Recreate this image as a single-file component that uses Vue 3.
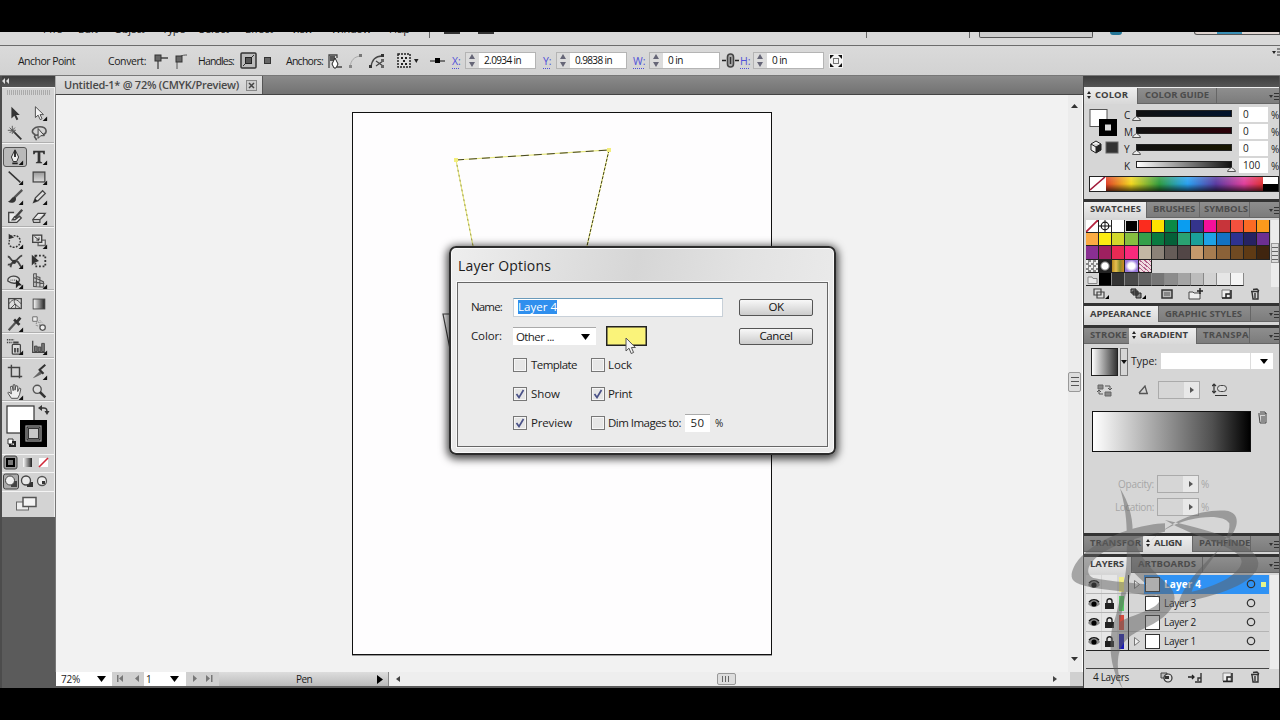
<script setup>
const menus = ['File', 'Edit', 'Object', 'Type', 'Select', 'Effect', 'View', 'Window', 'Help']
const menuWidths = [20, 20, 30, 23, 30, 28, 21, 40, 20]

// Spreads a label to the given width with letter spacing
const vFit = {
  mounted(el, { value }) {
    const natural = el.getBoundingClientRect().width
    el.style.letterSpacing = `${(value - natural) / el.textContent.length}px`
  },
}

const corner = '<path d="M19 14v5h-5z" fill="#111"/>'
const art = {
  select: '<path d="M6 3v13l3.3-3 2.4 5 2-1-2.4-4.8h4z" fill="#333"/>',
  direct: '<path d="M6 3v12l3-2.6 2.4 5 2-1-2.2-4.6h3.8z" fill="#f4f4f4" stroke="#444"/>' + corner,
  wand: '<path d="M8 8l9 9" stroke="#333" stroke-width="2"/><path d="M7 2v9M2 7h9M4 4l6 6M10 4l-6 6" stroke="#555"/>',
  lasso: '<path d="M6 12C-1 9 4 3 11 3c8 0 9 7 3 9-4 1-9-1-9 2 0 2 2 1 2 4" fill="none" stroke="#555" stroke-width="1.8"/><path d="M9 5v11l3-3h4z" fill="#ddd" stroke="#333"/>',
  pen: '<path d="M10 2l4 8-2 5H8l-2-5z" fill="#eee" stroke="#222"/><path d="M10 3v7M7 17h6" stroke="#222" stroke-width="2"/>' + corner,
  type: '<path d="M3.500 3h13v4h-1.400l-1-2H11.500v10l2 1v1h-7v-1l2-1V5H6l-1 2H3.500z" fill="#333"/>' + corner,
  line: '<path d="M3 4l13 12" stroke="#333" stroke-width="1.6"/>' + corner,
  rect: '<rect x="3.500" y="4.500" width="13" height="11" fill="url(#boxGradient)" stroke="#444" stroke-width="1.4"/>' + corner,
  brush: '<path d="M18 2l-9 9" stroke="#555" stroke-width="2.600"/><path d="M10 10c-4-1-4 4-8 5 4 3 10 1 9-4z" fill="#333"/>' + corner,
  pencil: '<path d="M4 16l2-5 8-8 3 3-8 8z" fill="#ddd" stroke="#444" stroke-width="1.4"/><path d="M4 16l2-4 2 2z" fill="#222"/>' + corner,
  blob: '<path d="M9 5H3v11h9l5-5-2-2-5 4H7l3-4" fill="#eee" stroke="#444" stroke-width="1.5"/><path d="M18 2l-8 9" stroke="#444" stroke-width="2.600"/>',
  eraser: '<path d="M3 13l6-7h8l-6 7v3H4zM3 13h8l6-6" fill="#eee" stroke="#444" stroke-width="1.3"/>' + corner,
  rotate: '<path d="M5 5c12-5 15 11 4 12-5 0-7-4-5-8" fill="none" stroke="#333" stroke-width="1.6" stroke-dasharray="2 1.5"/><path d="M3 2v6l6-2z" fill="#333"/>' + corner,
  scale: '<path d="M9 9h8v6H9z" fill="#e4e4e4" stroke="#666" stroke-width="1.5"/><rect x="3" y="3.500" width="10" height="8" fill="#ddd" stroke="#444" stroke-width="1.5"/><path d="M5 5l5 4M10 6v3H7" stroke="#222" fill="none"/>' + corner,
  warp: '<path d="M2 5c4 0 2 5 7 5s5-6 9-6M2 14c6 1 4-5 9-4s3 5 6 6M5 17c1-5 4-8 8-8" fill="none" stroke="#444" stroke-width="2"/><circle cx="9" cy="11" r="2.200" fill="#333"/>' + corner,
  free: '<rect x="6" y="4" width="11" height="12" fill="none" stroke="#333" stroke-width="2" stroke-dasharray="2 2"/><path d="M2 3v12l3-3 5-2z" fill="#333"/>',
  symbol: '<path d="M2 10c-1-7 13-7 13-1-1 4-8 5-13 1z" fill="#ddd" stroke="#444" stroke-width="1.5"/><path d="M11 8v10l3-3h4z" fill="#222"/><path d="M5 9h6" stroke="#333" stroke-dasharray="1 1"/>' + corner,
  graph: '<path d="M4 2v14l13 1M4 2h3v14M7 5l4 1v10M4 6l7 3 4 2v5M4 11l12 2" fill="#ccc" stroke="#555" stroke-width="1.2"/>' + corner,
  mesh: '<rect x="3" y="4" width="14" height="11" fill="#ddd" stroke="#444" stroke-width="1.4"/><path d="M3 10c5-7 9-6 14 0M10 4c-3 5 3 7 0 11M5 15l5-5 6 5" fill="none" stroke="#444"/>',
  grad: '<rect x="3.500" y="4.500" width="13" height="11" fill="url(#toolGradient)" stroke="#444"/>',
  eyedrop: '<path d="M3 17l8-9" stroke="#555" stroke-width="2.500"/><path d="M9 5l6 6M12 8l4-5" stroke="#333" stroke-width="3"/>' + corner,
  blend: '<path d="M3 2h5v5H3z" fill="#eee" stroke="#666"/><circle cx="14" cy="14" r="3" fill="#eee" stroke="#555" stroke-width="1.4"/><path d="M7 8h4v4H7zM11 6l3 3" fill="none" stroke="#777" stroke-dasharray="1 1"/>',
  spray: '<rect x="7" y="7" width="9" height="11" rx="1" fill="#ddd" stroke="#444" stroke-width="1.4"/><path d="M8 5h6M10 11v5M13 11v5" stroke="#444" stroke-width="2"/><path d="M1 2h8M1 5h6" stroke="#444" stroke-width="1.6" stroke-dasharray="1.5 1"/>' + corner,
  bars: '<path d="M3 3v13h14" fill="none" stroke="#444" stroke-width="1.4"/><path d="M5 15V9h3v6zM9 15v-5h3v5zM13 15V6h3v9z" fill="#777" stroke="#444"/>' + corner,
  crop: '<path d="M6 2v13h12M2 5h13v12" fill="none" stroke="#444" stroke-width="1.6"/>',
  slice: '<path d="M3 17l8-8 3 2c-3 3-7 4-11 6z" fill="#666"/><path d="M10 8l7-6M10 7l5 5" stroke="#333" stroke-width="2.400"/>' + corner,
  hand: '<path d="M6 17L2 11l1-1 3 2-1-8 2-.5 1 5V2h2v6l1-5 2 .5v6l2-4 1.500 1L15 13l-2 4z" fill="#eee" stroke="#444"/>' + corner,
  zoom: '<circle cx="8" cy="7" r="4.500" fill="#ddd" stroke="#555" stroke-width="1.5"/><path d="M11 10l6 6" stroke="#333" stroke-width="2.800"/>',
}
const toolGroups = [
  { cls: 'g1', tools: ['select', 'direct', 'wand', 'lasso'] },
  { cls: 'g2', tools: ['pen', 'type', 'line', 'rect', 'brush', 'pencil', 'blob', 'eraser'] },
  { cls: 'g3', tools: ['rotate', 'scale', 'warp', 'free', 'symbol', 'graph'] },
  { cls: 'g4', tools: ['mesh', 'grad', 'eyedrop', 'blend'] },
  { cls: 'g5', tools: ['spray', 'bars'] },
  { cls: 'g6', tools: ['crop', 'slice', 'hand', 'zoom'] },
]

const channels = [
  { name: 'C', value: '0', bar: 'linear-gradient(90deg,#111,#00112c)', at: 0 },
  { name: 'M', value: '0', bar: 'linear-gradient(90deg,#111,#2c0008)', at: 0 },
  { name: 'Y', value: '0', bar: 'linear-gradient(90deg,#111,#181600)', at: 0 },
  { name: 'K', value: '100', bar: 'linear-gradient(90deg,#fff,#111)', at: 95 },
]

const swatches = [
  'none', 'reg', '#fff', '#000', '#fb2c1e', '#ffe000', '#0b8a46', '#0a9df0', '#34348c', '#f5109a', '#c7343a', '#f4513e', '#fb6a24', '#fb9a1c',
  '#fbab43', '#fbec12', '#d2d82c', '#86bf40', '#35a04a', '#0a7a40', '#056038', '#2aa272', '#1aa09a', '#1ea2e6', '#1272c4', '#2e3290', '#262262', '#6c2f92',
  '#8a2f92', '#9e2060', '#e82a54', '#f82a7c', '#c4b8a4', '#8c8278', '#665c58', '#524646', '#c69a6c', '#a67c50', '#8b6238', '#704a22', '#5f3a14', '#40250f',
]
const patterns = ['checker', 'glow', 'gold', 'violet', 'floral']
const greys = ['#000', '#333', '#4a4a4a', '#626262', '#767676', '#8c8c8c', '#a4a4a4', '#bcbcbc', '#d2d2d2', '#e6e6e6', '#f4f4f4']

const layers = [
  { name: 'Layer 4', color: '#f2ee84', active: true, arrow: true, locked: false },
  { name: 'Layer 3', color: '#52cf62', locked: true },
  { name: 'Layer 2', color: '#d64a3c', locked: true },
  { name: 'Layer 1', color: '#1b1bb4', arrow: true, locked: true },
]
</script>

<template>
  <div class="screen">
    <svg class="defs" width="0" height="0">
      <defs>
        <linearGradient id="toolGradient"><stop offset="0" stop-color="#fff" /><stop offset="1" stop-color="#222" /></linearGradient>
        <linearGradient id="boxGradient" x2="0" y2="1"><stop offset="0" stop-color="#999" /><stop offset="1" stop-color="#ddd" /></linearGradient>
      </defs>
    </svg>

    <header class="menubar">
      <div class="menus"><div v-for="(m, i) in menus" :key="m" class="menu"><span v-fit="menuWidths[i]">{{ m }}</span></div></div>
      <i class="mdiv"></i><i class="mblock"></i><i class="mblock second"></i>
      <i class="mdiv d2"></i><i class="mdiv d3"></i><i class="search"></i><i class="help"></i><i class="winbtns"><b></b></i>
    </header>

    <div class="control">
      <span><span v-fit="57">Anchor Point</span></span>
      <span><span v-fit="38">Convert:</span></span>
      <svg width="15" height="16"><path d="M6 5h8M4 7v9" stroke="#444" stroke-width="1.3" /><rect x="1" y="2" width="6" height="6" fill="#666" stroke="#333" /></svg>
      <svg width="15" height="16"><path d="M3 16V8c2-5 5-6 10-6" fill="none" stroke="#555" /><rect x="2" y="3" width="6" height="6" fill="#666" stroke="#333" /></svg>
      <span><span v-fit="36">Handles:</span></span>
      <svg width="17" height="17"><rect x="1" y="1" width="15" height="15" rx="1" fill="#bbb" stroke="#333" stroke-width="1.5" /><path d="M3 14L14 3" stroke="#333" /><rect x="5.500" y="5.500" width="6" height="6" fill="#555" stroke="#222" /></svg>
      <svg width="9" height="9"><rect x="1.500" y="1.500" width="6" height="6" fill="#666" stroke="#333" /></svg>
      <span><span v-fit="37">Anchors:</span></span>
      <svg width="17" height="16"><path d="M2 15V2h8v3M10 14h5" fill="none" stroke="#444" stroke-width="1.3" /><path d="M3 3h5v5H3z" fill="#555" /><path d="M8 5l3 6-2 4H7l-2-4z" fill="#fff" stroke="#222" /></svg>
      <svg width="16" height="16"><path d="M2 14C3 7 6 4 12 3" fill="none" stroke="#aaa" /><rect x="1" y="12" width="3" height="3" fill="#888" /><rect x="11" y="1" width="3" height="3" fill="#777" /></svg>
      <svg width="17" height="16"><path d="M2 14C3 6 7 3 13 3" fill="none" stroke="#444" stroke-width="1.3" /><path d="M7 8l7 5M7 13l7-5" fill="none" stroke="#444" stroke-width="1.2" /><rect x="0" y="12" width="3" height="3" fill="#333" /><rect x="12" y="1" width="3" height="3" fill="#333" /><path d="M12 6h3v3h-3zM12 12h3v3h-3z" fill="#666" /></svg>
      <svg width="23" height="16"><rect x="1" y="1" width="12" height="13" fill="#ddd" stroke="#222" stroke-width="1.5" stroke-dasharray="2 1" /><path d="M4 4h2v2H4zM8 4h2v2H8zM6 7h2v2H6zM4 10h2v2H4zM8 10h2v2H8z" fill="#222" /><path d="M17 6h4.500l-2.200 4z" fill="#222" /></svg>
      <svg width="17" height="8"><path d="M1 4h15" stroke="#111" /><rect x="6" y="1" width="5" height="5" fill="#000" /></svg>
      <span class="axis">X:</span>
      <div class="spin"><i></i><b><span v-fit="37">2.0934 in</span></b></div>
      <span class="axis">Y:</span>
      <div class="spin"><i></i><b><span v-fit="37">0.9838 in</span></b></div>
      <span class="axis">W:</span>
      <div class="spin"><i></i><b><span v-fit="15">0 in</span></b></div>
      <svg width="17" height="15"><path d="M0 7.500h4M13 7.500h4" stroke="#222" stroke-width="1.5" /><rect x="5.500" y="1" width="6" height="13" rx="3" fill="#aaa" stroke="#444" stroke-width="1.6" /><path d="M8.500 4v7" stroke="#333" stroke-width="1.5" /></svg>
      <span class="axis">H:</span>
      <div class="spin"><i></i><b><span v-fit="15">0 in</span></b></div>
      <svg width="14" height="14"><rect width="14" height="14" fill="#f4f4f4" /><path d="M1 5V1h4zM9 1h4v4zM1 9v4h4zM13 9v4H9z" fill="#111" /><rect x="4.500" y="4.500" width="5" height="5" fill="none" stroke="#777" /></svg>
      <svg class="flyout" width="8" height="9"><path d="M0 3h4l-2 3z" fill="#222" /><path d="M5 1h3M5 4h3M5 7h3" stroke="#333" /></svg>
    </div>

    <div class="body">
      <aside class="left">
        <div class="dockbar"><svg width="8" height="6"><path d="M3 0v6L0 3zM7 0v6L4 3z" fill="#ddd" /></svg></div>
        <div class="toolbox">
          <div class="grip"></div>
          <div v-for="g in toolGroups" :key="g.cls" class="group" :class="g.cls">
            <div v-for="t in g.tools" :key="t" class="tool" :class="{ on: t === 'pen' }">
              <svg width="20" height="20" viewBox="0 0 20 20" fill="none" v-html="art[t]"></svg>
            </div>
          </div>
          <div class="colors">
            <svg width="50" height="50" viewBox="0 0 50 50">
              <rect x="4" y="4" width="27" height="27" fill="#fff" stroke="#333" stroke-width="1.2" />
              <path d="M17 18h27v27H17z" fill="#000" /><rect x="24.500" y="25.500" width="12" height="12" fill="#c8c8c8" /><rect x="23" y="24" width="15" height="15" fill="none" stroke="#aaa" stroke-width="1.2" /><rect x="25.500" y="26.500" width="10" height="10" fill="none" stroke="#333" />
              <path d="M38 6h3c3 0 3 2 3 5" fill="none" stroke="#333" stroke-width="1.4" /><path d="M39 3v6l-4-3zM41.500 9h5l-2.500 4z" fill="#333" />
              <path d="M5 37h5v5H5z" fill="#fff" stroke="#333" /><path d="M9 40h3v4H7v-2" fill="none" stroke="#222" stroke-width="2" />
            </svg>
          </div>
          <div class="modes">
            <svg width="50" height="16"><rect x="1" y="1" width="13" height="13" rx="2" fill="#999" stroke="#444" /><rect x="4" y="4" width="7" height="7" fill="#777" stroke="#000" stroke-width="2" /><rect x="20" y="3" width="9" height="9" fill="url(#toolGradient)" /><rect x="36" y="3" width="9" height="9" fill="#fff" /><path d="M36 12l9-9" stroke="#d22a3a" stroke-width="1.6" /></svg>
          </div>
          <div class="modes draw">
            <svg width="50" height="18"><rect x="0.500" y="1" width="15" height="15" rx="2" fill="#aaa" stroke="#444" /><path d="M8 8h6v6H8z" fill="#444" /><circle cx="7" cy="7.500" r="4.500" fill="#f0f0f0" stroke="#444" /><path d="M24 9h6v5h-6z" fill="#333" /><circle cx="23" cy="7.500" r="4.500" fill="#e8e8e8" stroke="#444" stroke-width="1.3" /><circle cx="39" cy="8" r="4.500" fill="#eee" stroke="#555" stroke-width="1.3" /><path d="M39 8h3v3h-3z" fill="#333" /></svg>
          </div>
          <div class="screenmode"><svg width="24" height="16"><rect x="1.500" y="6" width="12" height="8" fill="#eee" stroke="#666" /><rect x="8" y="1.500" width="13" height="9" fill="#f4f4f4" stroke="#555" stroke-width="1.5" /></svg></div>
        </div>
      </aside>

      <main class="center">
        <div class="tabs"><div class="doctab"><span v-fit="175">Untitled-1* @ 72% (CMYK/Preview)</span><svg width="11" height="11"><rect x="0.500" y="0.500" width="10" height="10" fill="#ccc" stroke="#888" /><path d="M3 3l5 5M8 3L3 8" stroke="#444" stroke-width="1.5" /></svg></div></div>
        <div class="work">
          <div class="canvas">
            <div class="artboard"></div>
            <svg class="shapes" width="1012" height="576" fill="none">
              <path d="M417 151L400 65L553 55L531 151" stroke="#e8e880" stroke-width="1.2" />
              <path d="M400 65L553 55" stroke="#444426" stroke-dasharray="8 5" />
              <path d="M553 55L531 151" stroke="#44441a" stroke-dasharray="3 1.5" />
              <path d="M400 65L417 151" stroke="#9a9a50" stroke-dasharray="2 3" />
              <path d="M398 63h4v4h-4zM551 53h4v4h-4z" fill="#f3ee7c" />
              <path d="M396 219h-9l8 40" stroke="#444" stroke-width="1.2" />
            </svg>
          </div>
          <div class="vscroll"><svg width="7" height="4"><path d="M0 4l3.500-4L7 4z" fill="#333" /></svg><i></i><svg width="7" height="4"><path d="M0 0l3.500 4L7 0z" fill="#333" /></svg></div>
        </div>
        <div class="status">
          <div class="zoomlevel"><span v-fit="19">72%</span><svg width="9" height="6"><path d="M0 0h9L4.500 6z" /></svg></div>
          <div class="nav"><svg width="24" height="8"><path d="M1 0h1.500v7H1zM7 0v7L3 3.500zM23 0v7l-4-3.500z" fill="#777" /></svg></div>
          <div class="pageno"><span>1</span><svg width="9" height="6"><path d="M0 0h9L4.500 6z" /></svg></div>
          <div class="nav"><svg width="24" height="8"><path d="M3 0v7l4-3.500zM16 0v7l4-3.500zM21 0h1.500v7H21z" fill="#777" /></svg></div>
          <div class="toolname"><span v-fit="16">Pen</span><svg width="6" height="9"><path d="M0 0v9l6-4.500z" /></svg></div>
          <div class="hscroll"><svg width="5" height="7"><path d="M4 0v6L0 3z" fill="#444" /></svg><i></i><svg width="5" height="7"><path d="M0 0v6l4-3z" fill="#444" /></svg></div>
        </div>
      </main>

      <aside class="right">
        <div class="dockbar"></div>
        <section class="panel p-color">
          <nav><a class="on c1"><i class="ud"></i><span v-fit="33">COLOR</span></a><a class="c2"><span v-fit="64">COLOR GUIDE</span></a><u></u></nav>
          <div class="colorbody">
            <div class="chips">
              <svg width="30" height="54"><rect x="1" y="1.500" width="17" height="17" fill="#fff" stroke="#555" /><path d="M10 11h18v17H10z" fill="#000" /><rect x="16" y="16.500" width="6" height="6" fill="#ddd" /><path d="M2 36l5-3 5 3v6l-5 3-5-3zM2 36l5 3 5-3M7 39v6" fill="#eee" stroke="#222" /><path d="M7 39l5-3v6l-5 3z" fill="#222" /><rect x="17" y="34" width="12" height="11" fill="#333" stroke="#666" /></svg>
            </div>
            <div class="sliders">
              <div v-for="c in channels" :key="c.name" class="ch">
                <b>{{ c.name }}</b>
                <div class="track"><div :style="{ background: c.bar }"></div><svg width="9" height="5" :style="{ marginLeft: c.at - 4 + 'px' }"><path d="M.500 4.500C1 2 3 2 4.500.500 6 2 8 2 8.500 4.500z" fill="#eee" stroke="#555" /></svg></div>
                <em>{{ c.value }}</em><s>%</s>
              </div>
            </div>
          </div>
          <div class="spectrum"><svg width="16" height="13"><rect width="16" height="14" fill="#fff" /><path d="M0 13L15 0" stroke="#a01838" stroke-width="1.6" /></svg><div></div><i></i></div>
        </section>

        <section class="panel p-swatch">
          <nav><a class="on s1"><span v-fit="51">SWATCHES</span></a><a class="s2"><span v-fit="42">BRUSHES</span></a><a class="s3"><span v-fit="44">SYMBOLS</span></a><u></u></nav>
          <div class="swrow">
            <div class="swatches">
              <template v-for="(s, i) in swatches" :key="i">
                <svg v-if="s === 'none'" class="sw" viewBox="0 0 12 12"><rect width="12" height="12" fill="#fff" /><path d="M0 12L12 0" stroke="#b5203c" stroke-width="1.8" /></svg>
                <svg v-else-if="s === 'reg'" class="sw" viewBox="0 0 12 12"><rect width="12" height="12" fill="#fff" /><path d="M6 0v12M0 6h12" stroke="#111" /><circle cx="6" cy="6" r="3.800" fill="none" stroke="#111" stroke-width="1.2" /></svg>
                <i v-else class="sw" :class="{ picked: s === '#000' }" :style="{ background: s }"></i>
              </template>
              <i v-for="p in patterns" :key="p" class="sw" :class="p"></i><i class="rest"></i>
              <svg class="folder" width="13" height="13"><path d="M2 4h4l1 1.500h4v5H2z" fill="#e8e8e8" stroke="#888" /><path d="M0 12.500h13" stroke="#222" /></svg>
              <i v-for="g in greys" :key="g" class="grey" :style="{ background: g }"></i>
            </div>
            <div class="mini"><i></i></div>
          </div>
          <div class="swfoot">
            <svg width="17" height="12"><path d="M1 1h7v6H1zM4 4h7v6H4z" fill="#ddd" stroke="#444" stroke-width="1.2" /><path d="M16 7v4h-4z" /></svg>
            <svg width="17" height="12"><path d="M1 1h5v4H1zM3 3h5v4H3zM6 5h5v5H6z" fill="#888" stroke="#222" /><path d="M16 7v4h-4z" /></svg>
            <svg width="13" height="12"><rect x="1" y="2" width="10" height="8" fill="#bbb" stroke="#333" stroke-width="1.5" /><path d="M3 5h6M3 7h6" stroke="#555" /></svg>
            <svg width="16" height="12"><path d="M1 4h4l1 1h6v6H1z" fill="#eee" stroke="#444" /><path d="M12 0v6M9 3h6" stroke="#222" stroke-width="1.5" /></svg>
            <svg width="11" height="12"><path d="M1 2h8v8H1z" fill="#eee" stroke="#777" /><path d="M1 10h9V2M5 10V6h4" fill="none" stroke="#222" stroke-width="1.5" /></svg>
            <svg width="11" height="12"><path d="M1 3.500h8M3 1.500l4-.5 2 2" fill="none" stroke="#333" stroke-width="1.3" /><path d="M2 4l1 7h5V4M5 5v5" fill="none" stroke="#333" stroke-width="1.4" /></svg>
          </div>
        </section>

        <section class="panel p-appear">
          <nav><a class="on a1"><span v-fit="61">APPEARANCE</span></a><a class="a2"><span v-fit="77">GRAPHIC STYLES</span></a><u></u></nav>
        </section>

        <section class="panel p-grad">
          <nav><a class="g-a"><span v-fit="37">STROKE</span></a><a class="on g-b"><i class="ud"></i><span v-fit="48">GRADIENT</span></a><a class="g-c"><span v-fit="46">TRANSPA</span></a><u></u></nav>
          <div class="gtype"><div class="gthumb"></div><div class="gdrop"><i></i></div><div class="gt"><span v-fit="26">Type:</span></div><div class="gsel"><i></i></div></div>
          <div class="gangle">
            <svg width="16" height="15"><path d="M1 2h5v4H1zM8 9h6v4H8z" fill="#888" stroke="#666" /><path d="M8 3h5v3M11 5l2 2 2-2M6 11H2V8M0 9l2-2 2 2" fill="none" stroke="#555" /></svg>
            <svg width="11" height="10"><path d="M1 8.500h9M1 8L7 1l2 7" fill="none" stroke="#555" stroke-width="1.3" /></svg>
            <div class="dis"><i></i></div>
            <svg width="16" height="14"><path d="M2 1v9M0 3l2-2 2 2M0 8l2 2 2-2M3 12.500h12" fill="none" stroke="#333" stroke-width="1.2" /><rect x="5.500" y="2.500" width="9" height="6" rx="3" fill="#ddd" stroke="#444" /></svg>
          </div>
          <div class="gbarrow"><div class="gbar"></div><svg width="11" height="13"><path d="M1 3h9M3 1h5l1 2M2 4l1 8h6V4M5 5v6M7 5v6" fill="none" stroke="#444" /></svg></div>
          <div class="glab first"><div class="lab"><span v-fit="36">Opacity:</span></div><div class="dis"><i></i></div><em>%</em></div>
          <div class="glab"><div class="lab"><span v-fit="39">Location:</span></div><div class="dis"><i></i></div><em>%</em></div>
        </section>

        <section class="panel p-align">
          <nav><a class="t1"><span v-fit="51">TRANSFOR</span></a><a class="on t2"><i class="ud"></i><span v-fit="28">ALIGN</span></a><a class="t3"><span v-fit="51">PATHFINDE</span></a><u></u></nav>
        </section>

        <section class="panel p-layers">
          <nav><a class="on l1"><span v-fit="34">LAYERS</span></a><a class="l2"><span v-fit="58">ARTBOARDS</span></a><u></u></nav>
          <div class="laywrap">
            <div class="laylist">
              <div v-for="l in layers" :key="l.name" class="layer" :class="{ active: l.active }">
                <div class="cell"><svg width="12" height="9"><path d="M0 5c3-5 9-5 12 0-3 4-9 4-12 0z" fill="#888" /><path d="M1 3c3-3 7-3 10 0" fill="none" stroke="#111" stroke-width="1.4" /><circle cx="6" cy="5" r="2.600" fill="#000" /></svg></div>
                <div class="cell"><svg v-if="l.locked" width="9" height="11"><path d="M2 5V3c0-3 5-3 5 0v2" fill="none" stroke="#222" stroke-width="1.4" /><rect y="5" width="9" height="6" fill="#222" /></svg></div>
                <i class="lc" :style="{ background: l.color }"></i>
                <div class="lrow">
                  <div class="tri"><svg v-if="l.arrow" width="6" height="9"><path d="M.500.500v8l5-4z" fill="#eee" stroke="#777" /></svg></div>
                  <div class="main"><i class="th"></i><span v-fit="l.active ? 37 : 32">{{ l.name }}</span><svg width="10" height="10"><circle cx="5" cy="5" r="3.700" fill="none" stroke="#333" stroke-width="1.2" /></svg><i class="sel"></i></div>
                </div>
              </div>
            </div>
            <div class="mini"></div>
          </div>
          <div class="layfoot">
            <div><span v-fit="36">4 Layers</span></div>
            <svg width="13" height="11"><path d="M1 1h6v5H1z" fill="#bbb" stroke="#444" /><circle cx="8" cy="6" r="4" fill="#ddd" stroke="#333" stroke-width="1.2" /><path d="M5 4h4v3H5z" fill="#333" /></svg>
            <svg width="15" height="11"><path d="M0 5h6M4 3l2 2-2 2" fill="none" stroke="#222" stroke-width="1.3" /><path d="M13 1v9H7M10 9V6h3" fill="none" stroke="#333" stroke-width="1.4" /></svg>
            <svg width="11" height="11"><path d="M1 1h8v8H1z" fill="#eee" stroke="#888" /><path d="M1 9.500h9V1M5 9V5h4" fill="none" stroke="#222" stroke-width="1.5" /></svg>
            <svg width="11" height="12"><path d="M1 3.500h8M3 1.500l4-.5 2 2" fill="none" stroke="#333" stroke-width="1.3" /><path d="M2 4l1 7h5V4M5 5v5" fill="none" stroke="#333" stroke-width="1.4" /></svg>
          </div>
        </section>
      </aside>
    </div>

    <div class="dialog">
      <h1><span v-fit="93">Layer Options</span></h1>
      <div class="form">
        <label><span v-fit="31">Name:</span></label>
        <div class="name"><mark><span v-fit="39">Layer 4</span></mark></div>
        <button><span v-fit="15">OK</span></button>
        <label><span v-fit="31">Color:</span></label>
        <div class="colorpick"><div class="select"><span v-fit="38">Other ...</span><svg width="9" height="6"><path d="M0 0h9L4.500 6z" /></svg></div><div class="yellow"></div></div>
        <button><span v-fit="33">Cancel</span></button>
        <div class="check c-a"><i></i><span v-fit="46">Template</span></div>
        <div class="check"><i></i><span v-fit="24">Lock</span></div>
        <div class="check c-a"><i><svg width="10" height="10"><path d="M1.500 5l2.500 3.500L8.500 1" fill="none" stroke="#4a5288" stroke-width="1.7" /></svg></i><span v-fit="29">Show</span></div>
        <div class="check"><i><svg width="10" height="10"><path d="M1.500 5l2.500 3.500L8.500 1" fill="none" stroke="#4a5288" stroke-width="1.7" /></svg></i><span v-fit="24">Print</span></div>
        <div class="check c-a"><i><svg width="10" height="10"><path d="M1.500 5l2.500 3.500L8.500 1" fill="none" stroke="#4a5288" stroke-width="1.7" /></svg></i><span v-fit="41">Preview</span></div>
        <div class="check dim"><i></i><span v-fit="73">Dim Images to:</span><div class="pct"><span v-fit="14">50</span></div><em>%</em></div>
      </div>
    </div>
    <svg class="cursor" width="12" height="18"><path d="M1 1v13l3-2.800 2.200 5.300 2.400-1L6.400 10.500h4z" fill="#f4f4f4" stroke="#555" /></svg>

    <svg class="mark" width="215" height="215" viewBox="0 0 645 645">
      <path d="M165 25C190 65 204 110 203 160C215 225 260 270 310 315C350 355 325 405 245 442C200 462 170 480 160 530C155 565 162 600 174 628C136 570 130 500 142 440C155 410 170 330 180 290C186 260 186 210 185 150C184 105 176 60 165 25z
        M200 270C190 310 175 370 165 425C200 405 275 390 285 360C270 330 225 300 200 270z" fill-rule="evenodd" />
      <path d="M300 130C180 135 22 210 20 290C22 330 160 325 260 350C280 345 300 340 310 325C280 310 170 312 90 295C40 280 75 195 300 155z" />
      <path d="M255 185C320 120 410 85 490 93C530 105 520 150 480 190C440 230 360 300 340 370C450 350 580 310 580 250C578 200 480 160 300 120C390 175 530 200 530 245C525 285 450 320 380 335C400 270 500 190 493 130C480 108 430 105 370 120C330 130 290 150 255 185z" />
    </svg>
  </div>
</template>

<style>
body { background: #000; overflow: hidden; }
</style>

<style scoped>
* { box-sizing: border-box; }
.screen { width: 1280px; height: 720px; padding: 32px 0; background: #000; position: relative; overflow: hidden; font: 10.5px/14px "Open Sans", "Noto Sans", sans-serif; color: #1c1c1c; }
svg { display: block; flex: none; }
.defs { position: absolute; }
span { white-space: nowrap; }
i, em, s, u, b, a { font-style: normal; text-decoration: none; }
span[style] { display: inline-block; }
.menubar { height: 14px; background: #d9d9d9; border-bottom: 1px solid #6c6c6c; display: flex; align-items: flex-start; overflow: hidden; }
.menus { display: grid; grid-template-columns: 35px 36px 48px 37px 46px 46px 40px 58px 48px; padding-left: 43px; width: 453px; }
.menu { height: 4px; display: flex; align-items: flex-end; font-size: 11px; }
.mdiv { width: 1px; height: 6px; background: #666; margin-left: -23px; }
.mblock { width: 16px; height: 2px; background: #333; margin-left: 14px; }
.mblock.second { margin-left: 18px; }
.mdiv.d2 { margin-left: 372px; }
.mdiv.d3 { margin-left: 102px; }
.search { width: 115px; height: 6px; margin-left: 9px; border: 1px solid #555; border-top: 0; border-radius: 0 0 2px 2px; background: #ccc; }
.help { width: 12px; height: 3px; margin-left: 17px; background: #237596; border-radius: 0 0 6px 6px; }
.winbtns { width: 86px; height: 3px; margin-left: 72px; border: 1px solid #555; border-top: 0; background: #ded4d0; display: flex; padding-left: 22px; border-radius: 0 0 0 3px; }
.winbtns b { width: 25px; height: 2px; background: #3a8fb5; }

.control { height: 30px; background: linear-gradient(#dadada, #d2d2d2); border-bottom: 1px solid #777; display: grid; align-items: center; padding-left: 18px; position: relative;
  grid-template-columns: 90px 46px 20px 24px 42px 23px 23px 41px 21px 21px 28px 32px 23px 13px 78px 13px 77px 16px 73px 18px 13px 76px 1fr; }
.axis { color: #5050d8; text-decoration: underline dotted; text-underline-offset: 3px; }
.spin { width: 71px; height: 17px; display: flex; border: 1px solid #b4b4b4; background: #fff; }
.spin i { width: 13px; background: #dcdcdc; position: relative; }
.spin i::before, .spin i::after { content: ""; position: absolute; left: 3px; border: 3.5px solid transparent; }
.spin i::before { top: -2px; border-bottom: 5px solid #667; }
.spin i::after { bottom: -2px; border-top: 5px solid #667; }
.spin b { font-weight: 400; padding-left: 5px; line-height: 15px; color: #111; font-size: 10px; }
.flyout { position: absolute; right: 0; top: 2px; }

.body { height: 612px; display: flex; background: #5b5b5b; }
.left { width: 55px; border-left: 2px solid #4c4c4c; }
.dockbar { height: 11px; background: linear-gradient(#3d3d3d, #555); padding: 2px 0 0 0; }
.toolbox { height: 430px; width: 53px; background: #d3d3d3; border-top: 1px solid #eee; display: flex; flex-direction: column; border-right: 1px solid #eee; }
.grip { height: 5px; margin: 2px 4px 8px 5px; background: repeating-linear-gradient(90deg, #999 0 1px, transparent 1px 2px); opacity: .7; }
.group { display: grid; grid-template-columns: 24px 24px; grid-auto-rows: 20px; padding: 3px 0 0 1px; border-bottom: 1px solid #f4f4f4; box-shadow: 0 -1px 0 #b0b0b0 inset; }
.g1 { height: 41px; padding-top: 0; } .g2 { height: 84px; } .g3 { height: 63px; } .g4 { height: 43px; } .g5 { height: 25px; } .g6 { height: 43px; }
.tool { display: flex; align-items: center; justify-content: center; }
.tool svg { width: 18px; height: 18px; }
.tool.on { background: #b9b9b9; border: 1px solid #555; border-radius: 3px; }
.colors { height: 53px; padding-left: 1px; border-bottom: 1px solid #f4f4f4; }
.modes { height: 18px; padding: 0 0 0 1px; border-bottom: 1px solid #f4f4f4; }
.modes.draw { height: 19px; }
.screenmode { padding: 4px 0 0 13px; }

.center { width: 1028px; display: flex; flex-direction: column; }
.tabs { height: 19px; background: linear-gradient(#8a8a8a, #727272); border-bottom: 1px solid #444; border-left: 1px solid #aaa; }
.doctab { width: 207px; height: 18px; background: linear-gradient(#dedede, #cfcfcf); display: flex; align-items: center; gap: 7px; padding-left: 8px; border-right: 1px solid #555; font-size: 11px; font-weight: 600; color: #484848; }
.work { height: 577px; display: flex; background: #f2f2f2; }
.canvas { width: 1013px; position: relative; border-left: 1px solid #777; }
.artboard { position: absolute; left: 296px; top: 17px; width: 420px; height: 543px; background: #fefdfe; border: 1px solid #111; box-shadow: 0 1px 0 #999; }
.shapes { position: absolute; left: 0; top: 0; }
.vscroll { width: 15px; background: #ececec; display: flex; flex-direction: column; align-items: center; padding: 9px 1px 9px 0; border-right: 1px solid #fff; }
.vscroll i { width: 13px; height: 20px; margin: 264px 0 265px; border: 1px solid #999; border-radius: 2px; background: repeating-linear-gradient(transparent 0 3px, #555 3px 4px) 2px 1px / 8px 13px no-repeat, #ddd; }
.status { height: 14px; display: flex; background: #d0d0d0; line-height: 14px; margin-left: 1px; font-size: 10px; }
.zoomlevel { width: 56px; background: #fff; display: flex; align-items: center; gap: 17px; padding-left: 5px; }
.nav { width: 32px; display: flex; align-items: center; justify-content: center; }
.pageno { width: 42px; background: #fff; display: flex; align-items: center; gap: 18px; padding-left: 2px; }
.toolname { width: 170px; background: linear-gradient(#ddd, #bbb); display: flex; align-items: center; padding-left: 77px; gap: 65px; border-right: 1px solid #888; margin-left: 1px; }
.hscroll { width: 681px; background: #eee; display: flex; align-items: center; padding-left: 7px; }
.hscroll i { width: 19px; height: 12px; margin: 0 317px 0 316px; border: 1px solid #999; border-radius: 2px; background: repeating-linear-gradient(90deg, #666 0 1px, transparent 1px 3px) 4px 2px / 9px 6px no-repeat, #ddd; }

.right { width: 197px; border-left: 1px solid #444; border-right: 1px solid #555; overflow: hidden; background: #333; }
.panel { background: #d6d6d6; margin-bottom: 3px; overflow: hidden; }
nav { height: 16px; background: linear-gradient(#8e8e8e, #7c7c7c); display: flex; border-bottom: 1px solid #666; position: relative; }
nav a { height: 16px; padding-bottom: 2px; display: flex; align-items: center; font-weight: 700; font-size: 9.5px; color: #4c4c4c; border-right: 1px solid #666; overflow: hidden; }
nav a.on { background: linear-gradient(#eee, #d8d8d8); color: #3f3f3f; }
nav u { position: absolute; right: 0; top: 5px; width: 5px; height: 7px; background: repeating-linear-gradient(#333 0 1px, transparent 1px 3px); }
nav u::before { content: ""; position: absolute; left: -5px; top: 2px; border: 2px solid transparent; border-top: 3px solid #333; }
.ud { width: 5px; height: 8px; margin-right: 3px; position: relative; flex: none; }
.ud::before, .ud::after { content: ""; position: absolute; left: 0; border: 2.5px solid transparent; }
.ud::before { top: -2px; border-bottom: 3px solid #222; }
.ud::after { bottom: -2px; border-top: 3px solid #222; }
.p-color { height: 112px; border-top: 1px solid #eee; }
.c1 { width: 54px; padding-left: 3px; } .c2 { width: 79px; padding-left: 7px; }
.colorbody { height: 72px; display: flex; padding: 2px 0 0 5px; }
.chips { width: 34px; padding-top: 2px; }
.sliders { flex: 1; }
.ch { height: 17px; display: grid; grid-template-columns: 12px 103px 29px 12px; align-items: center; padding-left: 5px; }
.ch b { font-weight: 400; font-size: 10px; }
.track { padding-top: 7px; height: 17px; }
.track div { width: 96px; height: 7px; border: 1px solid #222; margin-bottom: -1px; margin-top: -3px; }
.ch em { background: #fff; height: 15px; padding-left: 4px; font-size: 10px; line-height: 15px; }
.ch s { font-size: 10px; padding-left: 3px; }
.spectrum { display: flex; width: 190px; height: 16px; margin: 0 0 0 5px; border: 1px solid #222; }
.spectrum svg { height: 14px; }
.spectrum div { width: 158px; background: linear-gradient(rgba(255,255,255,.15), transparent 50%, rgba(0,0,0,.65)), linear-gradient(90deg, #e04028, #f4d820 16%, #2f9c40 34%, #28a0c0 46%, #2aa0f0 52%, #5a3aa0 70%, #e0409c 88%, #e03030); }
.spectrum i { width: 15px; background: linear-gradient(#fff 50%, #000 50%); }
.p-swatch { height: 101px; }
.s1 { width: 63px; padding-left: 6px; } .s2 { width: 53px; padding-left: 6px; } .s3 { width: 50px; padding-left: 4px; }
.swrow { display: flex; height: 69px; padding: 2px 0 0 2px; }
.swatches { display: grid; grid-template-columns: repeat(14, 13.15px); grid-auto-rows: 13.2px; width: 185px; }
.sw, .grey { border-right: 1px solid #222; border-bottom: 1px solid #222; }
.picked { box-shadow: inset 0 0 0 1px #ddd; }
svg.sw { width: 13px; height: 13px; }
.rest { grid-column: span 9; }
.grey { border-right-color: #888; }
.checker { background: repeating-conic-gradient(#888 0 25%, #eee 0 50%) 0 0 / 5px 5px; }
.glow { background: radial-gradient(#fff 35%, #222 60%); }
.gold { background: linear-gradient(90deg, #b88a20, #e6c050, #8a8c2c, #d08a20); }
.violet { background: radial-gradient(#fff 35%, #9a7adc 70%); }
.floral { background: repeating-linear-gradient(40deg, #b4608a 0 1px, #f0dce0 1px 3px); }
.mini { width: 9px; background: #ececec; margin-left: 1px; padding-top: 23px; }
.mini i { display: block; height: 20px; border: 1px solid #999; background: repeating-linear-gradient(#ddd 0 3px, #666 3px 4px); }
.swfoot { display: grid; grid-template-columns: 37px 31px 27px 33px 29px 20px; padding: 1px 0 0 9px; align-items: center; }
.p-appear { height: 19px; }
.a1 { width: 75px; padding-left: 6px; } .a2 { width: 92px; padding-left: 6px; }
.p-appear nav a { padding-bottom: 0; }
.p-grad { height: 205px; }
.g-a { width: 45px; padding-left: 6px; border: 0; } .g-b { width: 68px; padding-left: 3px; } .g-c { width: 53px; padding-left: 6px; }
.gtype { display: flex; align-items: center; height: 32px; padding: 4px 0 0 7px; }
.gthumb { width: 27px; height: 28px; border: 1px solid #222; background: linear-gradient(90deg, #fff, #333); }
.gdrop { width: 8px; height: 28px; margin: 0 3px 0 2px; border: 1px solid #777; display: flex; align-items: center; justify-content: center; }
.gdrop i { border: 3px solid transparent; border-top: 4px solid #111; margin-top: 3px; }
.gt { padding-bottom: 3px; }
.gsel { width: 112px; height: 16px; background: #fff; margin: 0 0 3px 4px; position: relative; }
.gsel::before { content: ""; position: absolute; right: 22px; top: 0; width: 1px; height: 16px; background: #ddd; }
.gsel i { position: absolute; right: 5px; top: 6px; border: 4.5px solid transparent; border-top: 5px solid #000; }
.gangle { display: grid; grid-template-columns: 41px 20px 54px 20px; align-items: center; padding: 0 0 0 13px; height: 28px; }
.dis { width: 42px; height: 18px; border: 1px solid #aaa; display: flex; justify-content: flex-end; }
.dis i { width: 15px; background: #e8e8e8; position: relative; }
.dis i::before { content: ""; position: absolute; left: 6px; top: 5px; border: 3.5px solid transparent; border-left: 4px solid #555; }
.gbarrow { display: flex; gap: 6px; padding: 7px 0 0 8px; height: 60px; }
.gbar { width: 159px; height: 41px; border: 1px solid #111; background: linear-gradient(90deg, #fff, #888 52%, #505050 76%, #000); }
.glab { display: flex; align-items: center; height: 23px; color: #a6a6a6; padding-left: 31px; font-size: 10px; }
.lab { width: 42px; }
.glab.first { margin-top: 8px; padding-left: 34px; }
.glab.first .lab { width: 39px; }
.glab em { margin-left: 2px; }
.p-align { height: 18px; }
.t1 { width: 59px; padding-left: 6px; border: 0; } .t2 { width: 50px; padding-left: 3px; } .t3 { width: 58px; padding-left: 6px; }
.p-layers { height: 131px; margin: 0; }
.l1 { width: 48px; padding-left: 6px; } .l2 { width: 71px; padding-left: 6px; }
.laywrap { display: flex; height: 96px; padding: 2px 0 0 2px; }
.laylist { width: 184px; border-bottom: 1px solid #444; }
.layer { display: flex; height: 19px; border-bottom: 1px solid #b4b4b4; align-items: center; }
.cell { width: 15px; height: 18px; margin-right: 1px; background: #e6e6e6; display: flex; align-items: center; justify-content: center; }
.lc { width: 5px; height: 15px; margin: 0 4px 0 1px; }
.lrow { flex: 1; height: 19px; display: flex; border-left: 1px solid #222; }
.tri { width: 15px; display: flex; align-items: center; justify-content: center; }
.main { flex: 1; display: flex; align-items: center; font-size: 10px; padding-left: 1px; }
.main > span { margin: 0 0 1px 4px; }
.th { width: 15px; height: 15px; background: #fff; border: 1px solid #333; }
.main svg { margin-left: auto; margin-right: 5px; }
.sel { width: 5px; height: 5px; margin-right: 3px; }
.active .main { background: #2f92f4; color: #fff; font-weight: 700; }
.active .sel { background: #e4f48c; }
.layer:last-child { border-bottom: 1px solid #222; }
.layfoot { display: grid; grid-template-columns: 67px 28px 34px 28px 20px; padding-left: 9px; font-size: 10px; height: 16px; align-items: center; }

.dialog { position: absolute; left: 449px; top: 246px; width: 387px; height: 209px; border: 2px solid #2c2c2c; border-radius: 7px; background: linear-gradient(100deg, #eee, #d6d6d6 45%, #e2e2e2 70%, #ececec); box-shadow: 0 2px 9px 2px rgba(0,0,0,.75), inset 0 0 0 1px #fafafa; padding: 0 6px; }
h1 { margin: 0; height: 34px; font-weight: 400; font-size: 14px; line-height: 35px; padding-left: 1px; }
.form { width: 371px; height: 165px; border: 1px solid #666; background: #ebebeb; display: grid; grid-template-columns: 42px 78px 148px 74px; grid-auto-rows: 28.8px; align-items: center; padding: 10px 0 0 13px; font-size: 11.5px; box-shadow: 0 0 0 1px #f8f8f8; }
.name { grid-column: 2 / 4; width: 210px; height: 19px; background: #fff; border: 1px solid #c8d0d8; border-top-color: #6a9aba; display: flex; align-items: center; padding-left: 4px; }
mark { background: #2f8fee; color: #fff; height: 14px; line-height: 14px; display: block; }
button { height: 17px; width: 74px; padding: 0; font: 11.5px/14px "Open Sans", sans-serif; border: 1px solid #555; border-radius: 2px; background: linear-gradient(#f8f8f8, #ccc); color: #111; display: flex; justify-content: center; align-items: center; }
.colorpick { grid-column: 2 / 4; display: flex; align-items: center; gap: 10px; }
.select { width: 83px; height: 18px; background: #fff; border-top: 1px solid #aaa; display: flex; align-items: center; justify-content: space-between; padding: 0 6px 0 3px; }
.yellow { width: 41px; height: 20px; background: #faf37a; border: 1px solid #222; box-shadow: inset 0 0 0 .5px #222; }
.check { display: flex; align-items: center; gap: 3px; grid-column: 3 / 5; }
.check.c-a { grid-column: 2 / 3; gap: 4px; }
.check i { width: 14px; height: 14px; flex: none; border: 1px solid #777; background: #e6e6e6; box-shadow: inset 0 0 0 1px #f6f6f6; padding: 1px; }
.pct { width: 25px; height: 18px; background: #fff; border-top: 1px solid #aaa; display: flex; align-items: center; justify-content: center; margin-left: 1px; }
.check em { font-size: 10px; margin-left: 2px; }
.cursor { position: absolute; left: 625px; top: 337px; }
.mark { position: absolute; left: 1065px; top: 480px; fill: #606060; opacity: .5; }
</style>
